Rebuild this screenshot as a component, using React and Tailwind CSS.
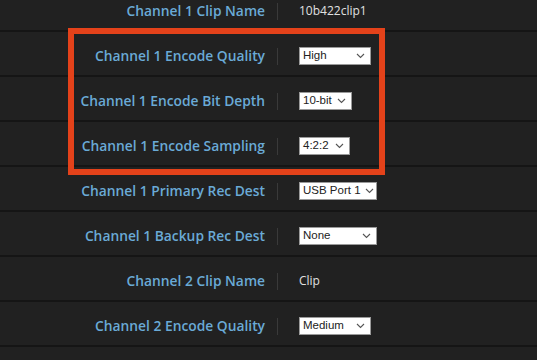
import React from "react";

const rows = [
  { label: "Channel 1 Clip Name", text: "10b422clip1" },
  { label: "Channel 1 Encode Quality", select: "High", w: "w-[72px]" },
  { label: "Channel 1 Encode Bit Depth", select: "10-bit", w: "w-[53px]" },
  { label: "Channel 1 Encode Sampling", select: "4:2:2", w: "w-[51px]" },
  { label: "Channel 1 Primary Rec Dest", select: "USB Port 1", w: "w-[78px]" },
  { label: "Channel 1 Backup Rec Dest", select: "None", w: "w-[78px]" },
  { label: "Channel 2 Clip Name", text: "Clip" },
  { label: "Channel 2 Encode Quality", select: "Medium", w: "w-[72px]" },
  { label: "", text: "" },
];

function Chevron() {
  return (
    <svg width="9" height="6" viewBox="0 0 9 6" className="shrink-0">
      <path d="M1 1 L4.5 4.5 L8 1" fill="none" stroke="#555" strokeWidth="1.1" />
    </svg>
  );
}

function Select({ value, w }) {
  return (
    <div
      className={`${w} h-[18px] bg-white border border-[#9a9a9a] flex items-center justify-between gap-1 pl-[3px] pr-[5px] text-[11.5px] text-[#222] leading-none whitespace-nowrap`}
      style={{ fontFamily: '"Liberation Sans", Arial, sans-serif' }}
    >
      <span>{value}</span>
      <Chevron />
    </div>
  );
}

export default function App() {
  return (
    <div className="relative w-[537px] h-[360px] overflow-hidden bg-[#212121]" style={{ fontFamily: '"Open Sans", "Noto Sans", sans-serif' }}>
      <div className="-mt-[13px] flex flex-col">
        {rows.map((r, i) => (
          <div key={i} className="h-[45px] flex items-center border-b-2 border-[#151515]">
            <div className="w-[265px] text-right text-[13.8px] font-semibold text-[#6aaad6] pt-[5px]">
              {r.label}
            </div>
            <div className="w-[24px] flex justify-center pt-[5px]">
              <div className="w-px h-[17px] bg-[#3a3a3a]" />
            </div>
            <div className="pl-[10px] pt-[5px] flex items-center">
              {r.select ? (
                <Select value={r.select} w={r.w} />
              ) : (
                <span className="text-[12px] text-[#e0e0e0]">{r.text}</span>
              )}
            </div>
          </div>
        ))}
      </div>
      <div className="absolute left-[68px] top-[28px] w-[317px] h-[147px] border-[6px] border-[#e4421a]" />
    </div>
  );
}
